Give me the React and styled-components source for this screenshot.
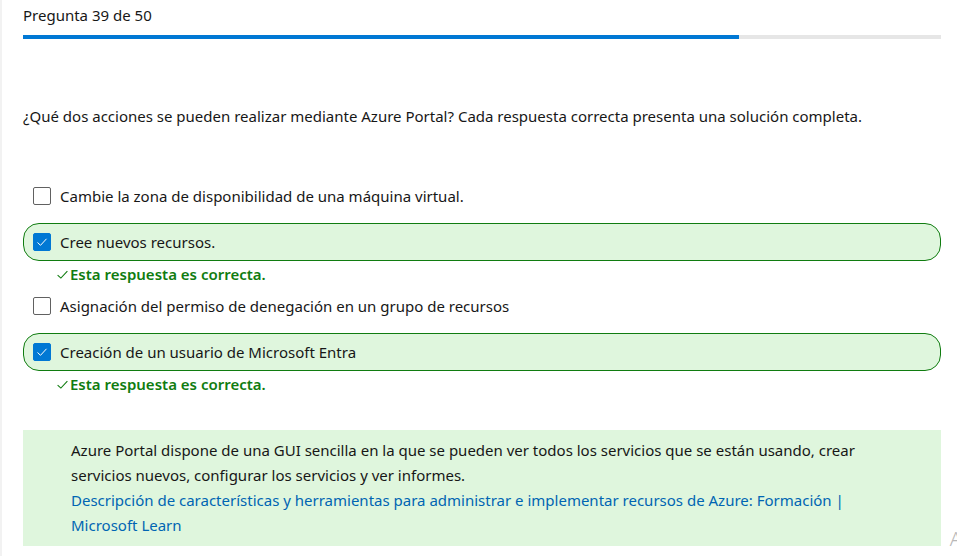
import styled, { createGlobalStyle } from "styled-components";

const GlobalStyle = createGlobalStyle`
  html, body {
    margin: 0;
    padding: 0;
    background: #ffffff;
  }
  body {
    font-family: "Segoe UI", "Noto Sans", sans-serif;
    color: #171717;
  }
`;

const Page = styled.div`
  position: relative;
  width: 957px;
  height: 556px;
  box-sizing: border-box;
  border-left: 2px solid #f2f2f2;
  padding: 5px 16px 0 21px;
  overflow: hidden;
`;

const Counter = styled.div`
  font-size: 15px;
  line-height: 20px;
`;

const Progress = styled.div`
  margin-top: 10px;
  height: 4px;
  background: #e6e6e6;
  > div {
    height: 100%;
    background: #0078d4;
  }
`;

const Question = styled.p`
  margin: 67px 0 0;
  font-size: 15px;
  line-height: 20px;
`;

const Options = styled.div`
  margin-top: 51px;
  display: flex;
  flex-direction: column;
`;

const Option = styled.div`
  display: flex;
  align-items: center;
  gap: 9px;
  height: 38px;
  box-sizing: border-box;
  padding-left: 9px;
  font-size: 15px;
  border-radius: 16px;
  border: 1px solid ${(p) => (p.$correct ? "#107c10" : "transparent")};
  background: ${(p) => (p.$correct ? "#dff6dd" : "transparent")};
  margin-top: ${(p) => (p.$gap ? "8px" : "0")};
`;

const Box = styled.span`
  width: 18px;
  height: 18px;
  box-sizing: border-box;
  border-radius: 2px;
  border: 1px solid ${(p) => (p.$checked ? "#0078d4" : "#616161")};
  background: ${(p) => (p.$checked ? "#0078d4" : "#ffffff")};
  display: flex;
  align-items: center;
  justify-content: center;
  flex: none;
`;

const Feedback = styled.div`
  display: flex;
  align-items: center;
  gap: 1px;
  height: 26px;
  padding-left: 33px;
  font-size: 15px;
  font-weight: 600;
  color: #107c10;
`;

const Explanation = styled.div`
  margin-top: 33px;
  background: #dff6dd;
  padding: 8px 60px 8px 48px;
  font-size: 15px;
  line-height: 25px;
  p {
    margin: 0;
  }
  a {
    color: #0065b3;
    text-decoration: none;
  }
`;

const Corner = styled.span`
  position: absolute;
  right: -5px;
  bottom: 4px;
  font-size: 20px;
  color: #b8b8b8;
  font-weight: 300;
`;

function Check({ color, size = 12 }) {
  return (
    <svg width={size} height={size} viewBox="0 0 12 12" fill="none">
      <path d="M1.5 6.5 L4.5 9.3 L10.5 2.8" stroke={color} strokeWidth="1" />
    </svg>
  );
}

const options = [
  { text: "Cambie la zona de disponibilidad de una máquina virtual.", correct: false },
  { text: "Cree nuevos recursos.", correct: true },
  { text: "Asignación del permiso de denegación en un grupo de recursos", correct: false },
  { text: "Creación de un usuario de Microsoft Entra", correct: true },
];

export default function App() {
  return (
    <>
      <GlobalStyle />
      <Page>
        <Counter>Pregunta 39 de 50</Counter>
        <Progress>
          <div style={{ width: `${(39 / 50) * 100}%` }} />
        </Progress>
        <Question>
          ¿Qué dos acciones se pueden realizar mediante Azure Portal? Cada respuesta correcta
          presenta una solución completa.
        </Question>
        <Options>
          {options.map((o, i) => (
            <div key={i}>
              <Option $correct={o.correct} $gap={o.correct}>
                <Box $checked={o.correct}>{o.correct && <Check color="#ffffff" />}</Box>
                {o.text}
              </Option>
              {o.correct && (
                <Feedback>
                  <Check color="#107c10" size={13} />
                  Esta respuesta es correcta.
                </Feedback>
              )}
            </div>
          ))}
        </Options>
        <Explanation>
          <p>
            Azure Portal dispone de una GUI sencilla en la que se pueden ver todos los servicios que
            se están usando, crear servicios nuevos, configurar los servicios y ver informes.
          </p>
          <a href="#">
            Descripción de características y herramientas para administrar e implementar recursos
            de Azure: Formación | Microsoft Learn
          </a>
        </Explanation>
        <Corner>A</Corner>
      </Page>
    </>
  );
}
